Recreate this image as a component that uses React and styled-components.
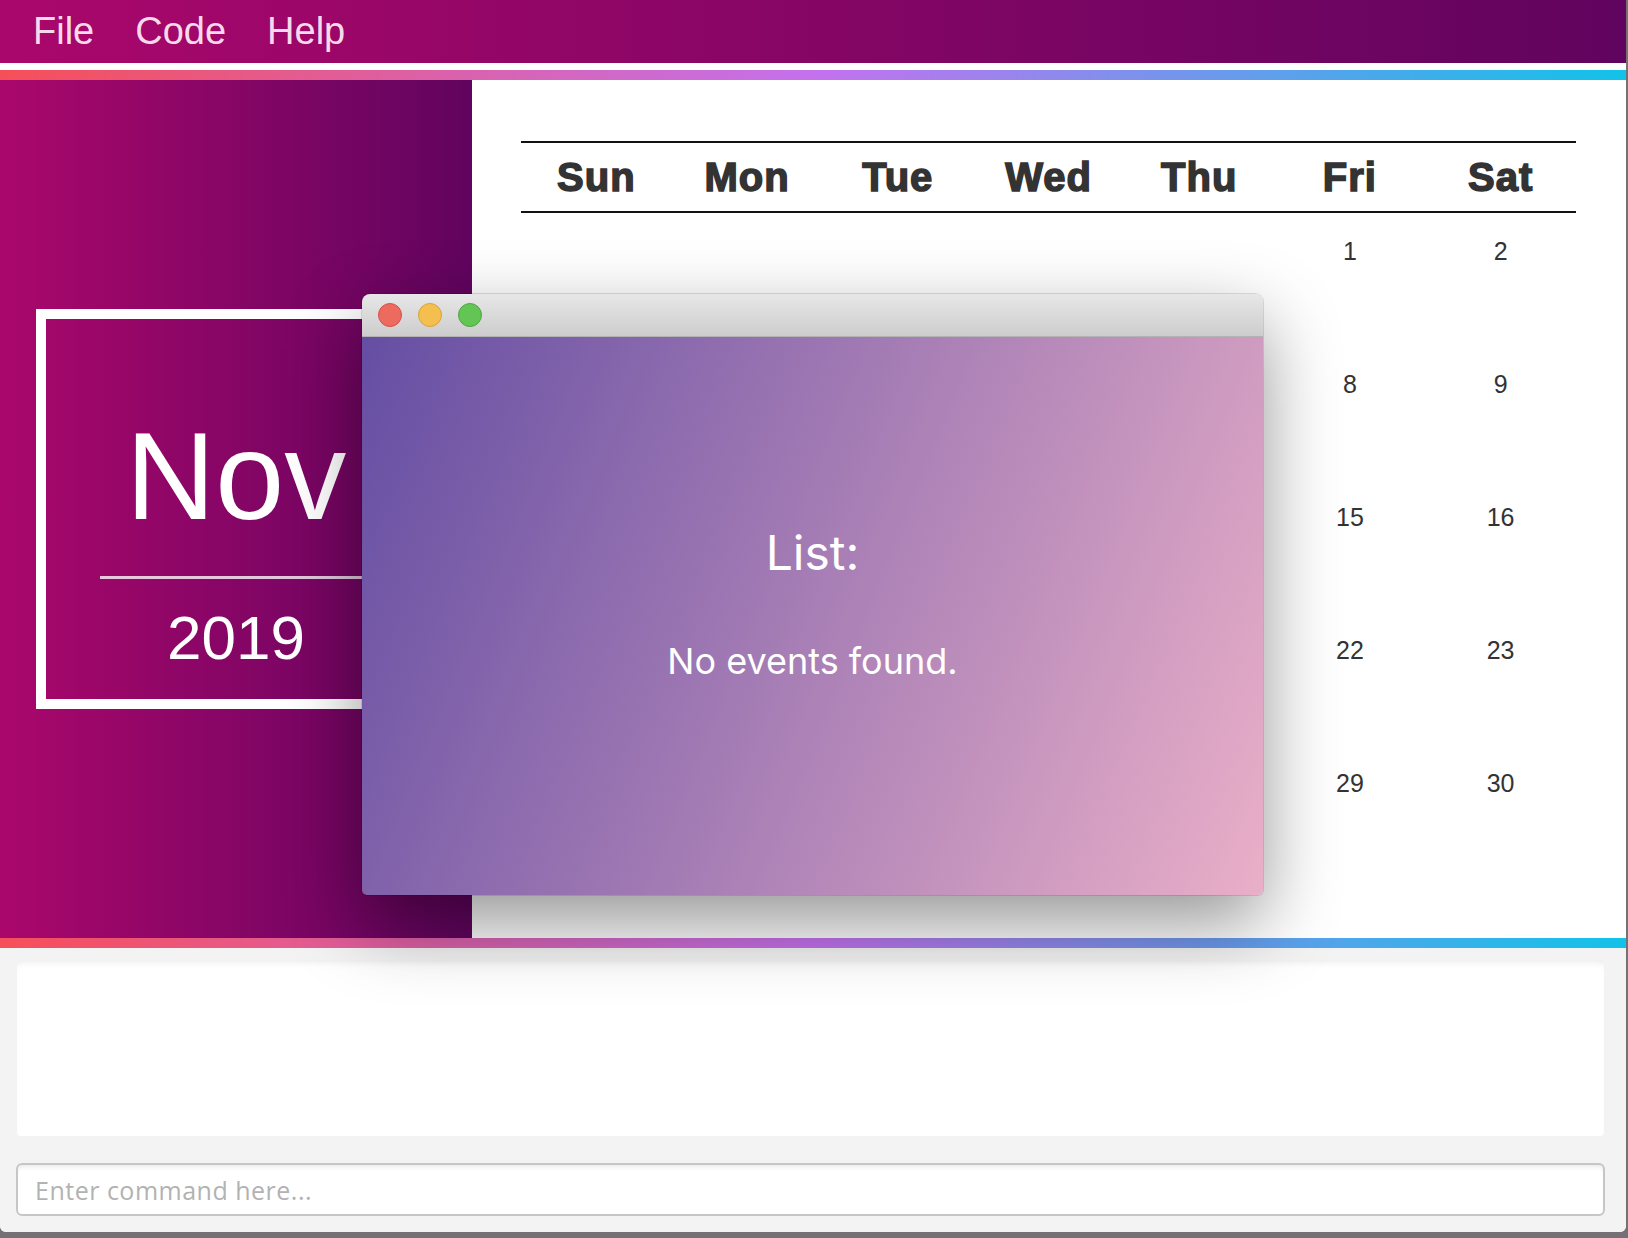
import React from "react";
import styled, { createGlobalStyle } from "styled-components";

const GlobalStyle = createGlobalStyle`
  html, body {
    margin: 0;
    padding: 0;
    background: #747074;
  }
  * {
    box-sizing: border-box;
  }
`;

const DAYS = ["Sun", "Mon", "Tue", "Wed", "Thu", "Fri", "Sat"];
const FIRST_WEEKDAY = 5; // Nov 1 2019 is a Friday
const DAYS_IN_MONTH = 30;

const buildCells = () => {
  const cells = [];
  for (let i = 0; i < FIRST_WEEKDAY; i++) cells.push(null);
  for (let d = 1; d <= DAYS_IN_MONTH; d++) cells.push(d);
  return cells;
};

export default function App() {
  const cells = buildCells();

  return (
    <>
      <GlobalStyle />
      <Window>
        <MenuBar>
          <MenuItem>File</MenuItem>
          <MenuItem>Code</MenuItem>
          <MenuItem>Help</MenuItem>
        </MenuBar>
        <RainbowBar />

        <Main>
          <MonthPanel>
            <MonthBox>
              <MonthName>Nov</MonthName>
              <Divider />
              <YearText>2019</YearText>
            </MonthBox>
          </MonthPanel>

          <CalendarArea>
            <WeekHeader>
              {DAYS.map((d) => (
                <DayName key={d}>{d}</DayName>
              ))}
            </WeekHeader>
            <DayGrid>
              {cells.map((c, i) => (
                <DayCell key={i}>{c}</DayCell>
              ))}
            </DayGrid>
          </CalendarArea>
        </Main>

        <RainbowBar />

        <Bottom>
          <LogPanel />
          <CommandInput placeholder="Enter command here..." />
        </Bottom>

        <Popup>
          <TitleBar>
            <Light $color="#ed6a5e" $edge="#d2524a" />
            <Light $color="#f5bf4f" $edge="#d8a23c" />
            <Light $color="#62c554" $edge="#4da73f" />
          </TitleBar>
          <PopupBody>
            <ListTitle>List:</ListTitle>
            <ListEmpty>No events found.</ListEmpty>
          </PopupBody>
        </Popup>
      </Window>
    </>
  );
}

const Window = styled.div`
  position: relative;
  width: 1626px;
  height: 1232px;
  display: flex;
  flex-direction: column;
  background: #f3f3f3;
  border-radius: 0 0 6px 6px;
  overflow: hidden;
`;

const MenuBar = styled.div`
  height: 70px;
  display: flex;
  align-items: flex-start;
  gap: 41px;
  padding: 10px 0 0 33px;
  background: linear-gradient(to right, #aa076b, #61045f);
  border-bottom: 7px solid #ffffff;
`;

const MenuItem = styled.span`
  font-family: "Liberation Sans", Arial, sans-serif;
  font-size: 38px;
  line-height: 42px;
  color: rgba(255, 240, 250, 0.92);
`;

const RainbowBar = styled.div`
  height: 10px;
  flex: none;
  background: linear-gradient(to right, #f64f59, #c471ed, #12c2e9);
`;

const Main = styled.div`
  height: 858px;
  display: flex;
`;

const MonthPanel = styled.div`
  width: 472px;
  flex: none;
  display: flex;
  align-items: center;
  justify-content: center;
  background: linear-gradient(to right, #aa076b, #61045f);
`;

const MonthBox = styled.div`
  width: 400px;
  height: 400px;
  border: 10px solid #ffffff;
  display: flex;
  flex-direction: column;
  align-items: center;
  padding-top: 95px;
`;

const MonthName = styled.div`
  font-family: "Liberation Sans", Arial, sans-serif;
  font-size: 124px;
  line-height: 1;
  color: #ffffff;
`;

const Divider = styled.div`
  width: 272px;
  height: 3px;
  margin: 38px 0 28px;
  background: rgba(255, 255, 255, 0.78);
`;

const YearText = styled.div`
  font-family: "Liberation Sans", Arial, sans-serif;
  font-size: 62px;
  line-height: 1;
  color: #ffffff;
`;

const CalendarArea = styled.div`
  flex: 1;
  background: #ffffff;
  padding: 61px 50px 0 49px;
`;

const WeekHeader = styled.div`
  height: 72px;
  display: grid;
  grid-template-columns: repeat(7, 1fr);
  align-items: center;
  border-top: 2px solid #111;
  border-bottom: 2px solid #111;
`;

const DayName = styled.div`
  text-align: center;
  font-family: "Liberation Sans", Arial, sans-serif;
  font-weight: 700;
  font-size: 40px;
  line-height: 1;
  letter-spacing: 1px;
  color: #333333;
  -webkit-text-stroke: 1.5px #333333;
`;

const DayGrid = styled.div`
  display: grid;
  grid-template-columns: repeat(7, 1fr);
  grid-auto-rows: 133px;
`;

const DayCell = styled.div`
  padding-top: 23px;
  text-align: center;
  font-family: "Liberation Sans", Arial, sans-serif;
  font-size: 25px;
  line-height: 30px;
  color: #333333;
`;

const Bottom = styled.div`
  flex: 1;
  display: flex;
  flex-direction: column;
  gap: 27px;
  padding: 12px 22px 0 17px;
  background: #f3f3f3;
`;

const LogPanel = styled.div`
  height: 176px;
  background: #ffffff;
  border-radius: 4px;
  box-shadow: inset 0 7px 8px -6px rgba(0, 0, 0, 0.1);
`;

const CommandInput = styled.input`
  height: 53px;
  margin: 0 -1px;
  padding: 0 0 0 17px;
  border: 2px solid #c6c6c6;
  border-radius: 6px;
  background: #ffffff;
  box-shadow: inset 0 5px 6px -5px rgba(0, 0, 0, 0.15);
  font-family: "Open Sans", "Liberation Sans", sans-serif;
  font-size: 25px;
  letter-spacing: 0.5px;
  color: #333;
  outline: none;

  &::placeholder {
    color: #b2b2b2;
  }
`;

const Popup = styled.div`
  position: absolute;
  left: 362px;
  top: 294px;
  width: 901px;
  height: 601px;
  display: flex;
  flex-direction: column;
  border-radius: 8px 8px 5px 5px;
  overflow: hidden;
  box-shadow: 0 28px 75px rgba(0, 0, 0, 0.42), 0 0 0 1px rgba(0, 0, 0, 0.12);
`;

const TitleBar = styled.div`
  height: 43px;
  flex: none;
  display: flex;
  align-items: center;
  gap: 16px;
  padding-left: 16px;
  background: linear-gradient(to bottom, #e7e7e7, #cdcdcd);
  border-bottom: 1px solid #b3b3b3;
`;

const Light = styled.span`
  width: 24px;
  height: 24px;
  border-radius: 50%;
  background: ${(p) => p.$color};
  border: 1px solid ${(p) => p.$edge};
`;

const PopupBody = styled.div`
  flex: 1;
  display: flex;
  flex-direction: column;
  align-items: center;
  padding-top: 191px;
  background: linear-gradient(112deg, #654ea3, #eaafc8);
  font-family: Inter, "Liberation Sans", sans-serif;
  color: #ffffff;
`;

const ListTitle = styled.div`
  font-size: 48px;
  line-height: 50px;
`;

const ListEmpty = styled.div`
  margin-top: 65px;
  font-size: 36px;
  line-height: 36px;
`;
